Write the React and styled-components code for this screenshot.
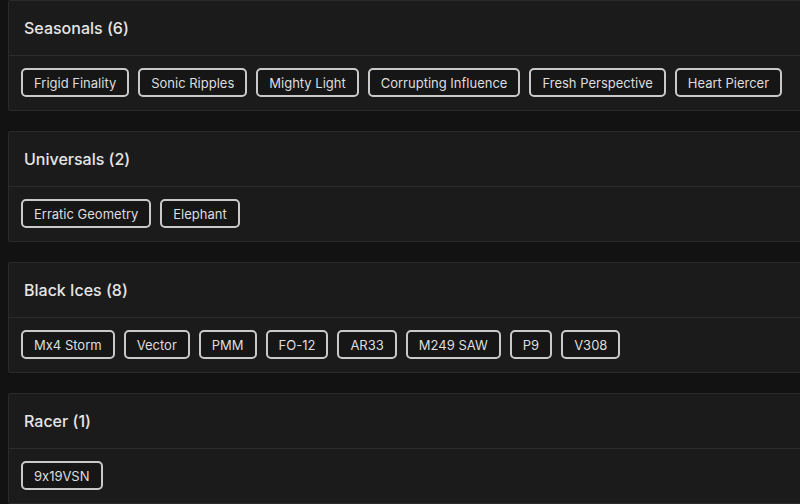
import React from 'react';
import styled, { createGlobalStyle } from 'styled-components';

var GlobalStyle = createGlobalStyle`
    html, body {
        margin: 0;
        padding: 0;
        background: #121212;
        font-family: Inter, "Noto Sans", sans-serif;
        font-feature-settings: "calt" 0;
        overflow: hidden;
    }
`;

var Page = styled.div`
    display: flex;
    flex-direction: column;
    gap: 20px;
    padding: 0 0 0 8px;
    width: 820px;
`;

var Card = styled.section`
    background: #1b1b1b;
    border: 1px solid #2a2a2a;
    border-radius: 2px;
`;

var Header = styled.h2`
    margin: 0;
    height: 54px;
    display: flex;
    align-items: center;
    padding: 0 15px;
    font-size: 16px;
    font-weight: 500;
    color: #e6e6e6;
    border-bottom: 1px solid #2c2c2c;
`;

var Body = styled.div`
    display: flex;
    flex-wrap: wrap;
    gap: 9px;
    padding: 12px 12px 13px;
`;

var Chip = styled.span`
    display: inline-flex;
    align-items: center;
    height: 29px;
    box-sizing: border-box;
    padding: 0 11px;
    border: 2px solid #c9c9c9;
    border-radius: 5px;
    background: #161616;
    color: #dedede;
    font-size: 13px;
    white-space: nowrap;
`;

var groups = [
    {
        name: 'Seasonals',
        items: [
            'Frigid Finality',
            'Sonic Ripples',
            'Mighty Light',
            'Corrupting Influence',
            'Fresh Perspective',
            'Heart Piercer',
        ],
    },
    { name: 'Universals', items: ['Erratic Geometry', 'Elephant'] },
    {
        name: 'Black Ices',
        items: ['Mx4 Storm', 'Vector', 'PMM', 'FO-12', 'AR33', 'M249 SAW', 'P9', 'V308'],
    },
    { name: 'Racer', items: ['9x19VSN'] },
];

export default function App() {
    return (
        <>
            <GlobalStyle />
            <Page>
                {groups.map((g) => (
                    <Card key={g.name}>
                        <Header>
                            {g.name} ({g.items.length})
                        </Header>
                        <Body>
                            {g.items.map((item) => (
                                <Chip key={item}>{item}</Chip>
                            ))}
                        </Body>
                    </Card>
                ))}
            </Page>
        </>
    );
}
